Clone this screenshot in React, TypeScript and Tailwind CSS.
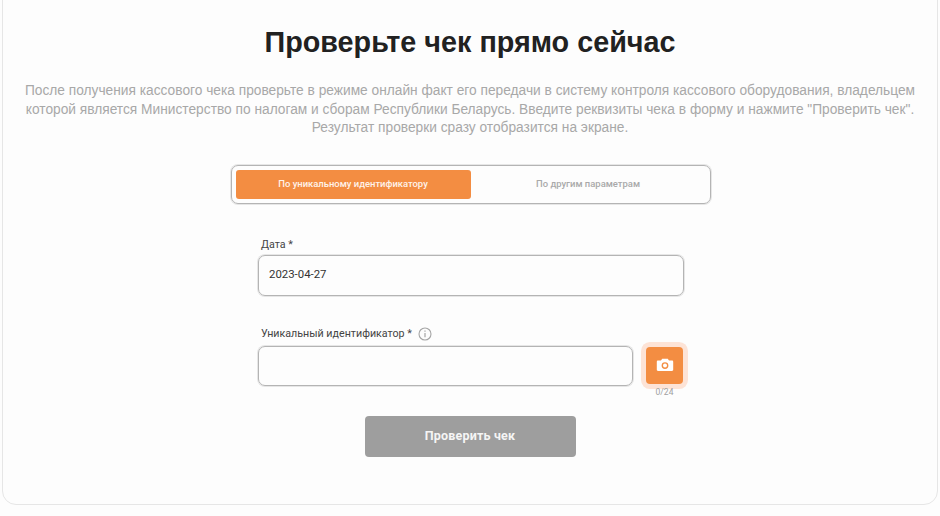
import React from "react";

function Field({ label, children }: { label: React.ReactNode; children: React.ReactNode }) {
  return (
    <div>
      <div className="h-[17px] pl-[3px] flex items-center text-[10.7px] leading-[17px] text-[#444]">{label}</div>
      {children}
    </div>
  );
}

function App() {
  return (
    <div className="w-[940px] h-[516px] overflow-hidden bg-[#fdfdfd] px-[2px] font-['Roboto',sans-serif]">
      <div className="h-[525px] -mt-[20px] pt-[20px] border border-[#e6e6e6] rounded-[14px] flex flex-col items-center">
        <h1 className="mt-[19px] h-[44px] text-[28.75px] leading-[44px] font-bold text-[#212121] font-['Liberation_Sans',sans-serif]">
          Проверьте чек прямо сейчас
        </h1>
        <p className="mt-[18px] w-[900px] text-center text-[13.74px] leading-[18.5px] text-[#a8a8a8] font-['Liberation_Sans',sans-serif]">
          После получения кассового чека проверьте в режиме онлайн факт его передачи в систему контроля кассового оборудования, владельцем которой является Министерство по налогам и сборам Республики Беларусь. Введите реквизиты чека в форму и нажмите "Проверить чек". Результат проверки сразу отобразится на экране.
        </p>

        <div className="mt-[27px] ml-[1px] w-[480px] h-[39px] p-[4px] border border-[#b4b4b4] ring-1 ring-[#e6e6e6] rounded-[7px] flex">
          <div className="w-[235px] bg-[#f38d42] rounded-[3px] flex items-center justify-center text-[9.45px] font-medium text-[#fff3ea]">
            По уникальному идентификатору
          </div>
          <div className="flex-1 flex items-center justify-center text-[9.45px] font-medium text-[#a9a9a9]">
            По другим параметрам
          </div>
        </div>

        <div className="mt-[32px] ml-[2px] w-[426px] self-center">
          <Field label="Дата *">
            <div className="mt-[2px] h-[41px] border border-[#b4b4b4] ring-1 ring-[#e6e6e6] rounded-[7px] flex items-center pl-[10px] text-[11.4px] text-[#333]">
              2023-04-27
            </div>
          </Field>

          <div className="mt-[29px]">
            <Field
              label={
                <>
                  <span>Уникальный идентификатор *</span>
                  <svg className="ml-[6px] mt-[1px]" width="14" height="14" viewBox="0 0 14 14" fill="none" stroke="#a5a5a5">
                    <circle cx="7" cy="7" r="6" strokeWidth="1.1" />
                    <path d="M7 6v4.2" strokeWidth="1.2" />
                    <path d="M7 3.6v1.2" strokeWidth="1.2" />
                  </svg>
                </>
              }
            >
              <div className="mt-[4px] flex items-start">
                <div className="w-[375px] h-[40px] border border-[#b4b4b4] ring-1 ring-[#e6e6e6] rounded-[7px]" />
                <div className="ml-[13px] flex flex-col items-center">
                  <div className="mt-[1px] w-[37px] h-[37px] bg-[#f38d42] rounded-[4px] ring-[5px] ring-[#fde3d6] flex items-center justify-center">
                    <svg width="18" height="14" viewBox="0 0 18 14">
                      <path
                        fill="#fff"
                        fillRule="evenodd"
                        d="M6.2 0.8h5.6l1.2 1.8h3c0.7 0 1.2 0.5 1.2 1.2v8c0 0.7-0.5 1.2-1.2 1.2H2c-0.7 0-1.2-0.5-1.2-1.2v-8c0-0.7 0.5-1.2 1.2-1.2h3zM9 4.2a3.4 3.4 0 1 0 0 6.8a3.4 3.4 0 1 0 0-6.8zM9 5.6a2 2 0 1 1 0 4a2 2 0 1 1 0-4z"
                      />
                    </svg>
                  </div>
                  <div className="mt-[3px] text-[8.5px] leading-[10px] text-[#a0a0a0]">0/24</div>
                </div>
              </div>
            </Field>
          </div>
        </div>

        <div className="mt-[19px] w-[211px] h-[41px] bg-[#9e9e9e] rounded-[4px] flex items-center justify-center text-[12.5px] font-bold tracking-[0.2px] text-[#f5f5f5]">
          Проверить чек
        </div>
      </div>
    </div>
  );
}

export default App;
